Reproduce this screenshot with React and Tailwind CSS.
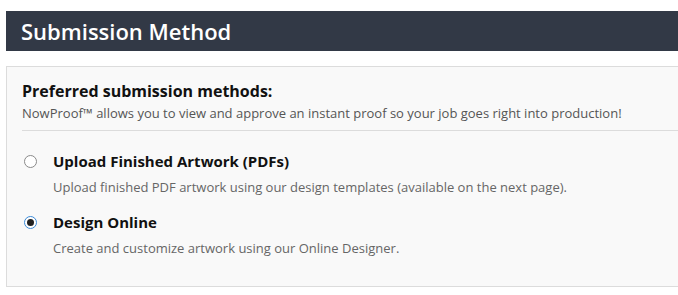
import React from 'react';

const options = [
  {
    id: 'upload',
    title: 'Upload Finished Artwork (PDFs)',
    desc: 'Upload finished PDF artwork using our design templates (available on the next page).',
    checked: false,
  },
  {
    id: 'design',
    title: 'Design Online',
    desc: 'Create and customize artwork using our Online Designer.',
    checked: true,
  },
];

function Radio({ checked }) {
  return checked ? (
    <span className="w-[13px] h-[13px] rounded-full border border-[#3b8ad8] bg-white flex items-center justify-center shrink-0">
      <span className="w-[7px] h-[7px] rounded-full bg-[#222]" />
    </span>
  ) : (
    <span className="w-[13px] h-[13px] rounded-full border border-[#8a8a8a] bg-white shrink-0" />
  );
}

export default function App() {
  return (
    <div className="bg-white w-[678px] h-[295px] overflow-hidden pt-[11px] pl-[6px] font-['Open_Sans',sans-serif]">
      {/* Header */}
      <div className="h-[40px] bg-[#323946] flex items-center pl-[15px]">
        <h2 className="text-white text-[22px] font-semibold leading-none">Submission Method</h2>
      </div>

      {/* Panel */}
      <div className="mt-[15px] h-[221px] bg-[#f9f9f9] border-y border-l border-[#dcdcdc] pl-[15px] pt-[13px]">
        <h3 className="text-[16px] font-bold text-[#111] leading-[22px]">Preferred submission methods:</h3>
        <p className="text-[13px] text-[#555] leading-[22px]">
          NowProof™ allows you to view and approve an instant proof so your job goes right into production!
        </p>
        <div className="mt-[6px] border-t border-[#dcdcdc]" />

        <div className="pt-[19px] flex flex-col gap-[15px]">
          {options.map((o) => (
            <div key={o.id}>
              <label className="flex items-center h-[22px]">
                <span className="w-[31px] pl-[2px] flex items-center">
                  <Radio checked={o.checked} />
                </span>
                <span className="text-[15px] font-bold text-[#111]">{o.title}</span>
              </label>
              <p className="pl-[31px] mt-[6px] text-[13px] text-[#666] leading-[18px]">{o.desc}</p>
            </div>
          ))}
        </div>
      </div>
    </div>
  );
}
